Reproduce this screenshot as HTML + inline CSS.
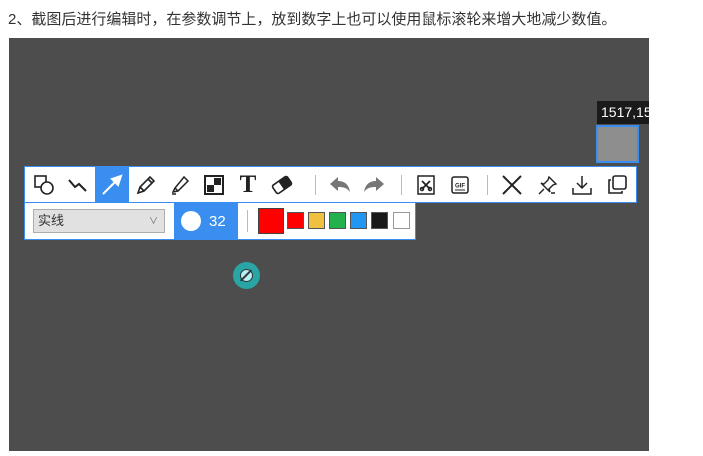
<!DOCTYPE html>
<html><head><meta charset="utf-8"><style>
*{margin:0;padding:0;box-sizing:border-box}
body{width:703px;height:456px;background:#fff;position:relative;overflow:hidden;font-family:"Liberation Sans","Noto Sans CJK SC",sans-serif}
.t{position:absolute;left:8px;top:8px;font-size:15px;color:#333;white-space:nowrap}
.dk{position:absolute;left:9px;top:38px;width:640px;height:413px;background:#4d4d4d}
.a{position:absolute}
.tb{left:24px;top:166px;width:613px;height:37px;background:#fff;border:1px solid #3a8ef0}
.b{position:absolute;top:0;width:34px;height:35px;display:flex;align-items:center;justify-content:center}
.sep{position:absolute;top:8px;width:1px;height:20px;background:#bbb}
.r2{left:24px;top:203px;width:392px;height:37px;background:#fff;border:1px solid #3a8ef0;border-top:none}
.sw{position:absolute;top:9px;width:17px;height:17px;border:1px solid #555}
</style></head><body>
<div class="t">2、截图后进行编辑时，在参数调节上，放到数字上也可以使用鼠标滚轮来增大地减少数值。</div>
<div class="dk"></div>
<div class="a" style="left:597px;top:101px;width:52px;height:23px;background:#1a1a1a;color:#fff;font-size:14px;line-height:23px;padding-left:4px;overflow:hidden;white-space:nowrap">1517,15</div>
<div class="a" style="left:596px;top:125px;width:43px;height:38px;background:#8e8e8e;border:2px solid #3a8ef0"></div>
<div class="a tb">
 <div class="b" style="left:2px"><svg width="22" height="22" viewBox="0 0 22 22" fill="none" stroke="#222" stroke-width="1.6"><rect x="2" y="2" width="11" height="11"/><circle cx="14" cy="14" r="6" fill="#fff"/></svg></div>
 <div class="b" style="left:36px"><svg width="22" height="22" viewBox="0 0 22 22" fill="none" stroke="#222" stroke-width="2"><polyline points="2,6 8,13 12,10 19,17"/></svg></div>
 <div class="b" style="left:70px;background:#3a8ef0"><svg width="24" height="24" viewBox="0 0 24 24" fill="none" stroke="#fff" stroke-width="2"><line x1="3" y1="21" x2="19" y2="5"/><polygon points="21,3 12,6 18,12" fill="#fff"/></svg></div>
 <div class="b" style="left:104px"><svg width="22" height="22" viewBox="0 0 22 22" fill="none" stroke="#222" stroke-width="1.6"><path d="M3 19l2-6L15 3l4 4L9 17z M5 13l4 4 M13 5l4 4"/></svg></div>
 <div class="b" style="left:138px"><svg width="22" height="22" viewBox="0 0 22 22" fill="none" stroke="#222" stroke-width="1.5"><path d="M4 18l2-4 9-11 4 4-10 10z M6 14l3 3 M3 20h4"/></svg></div>
 <div class="b" style="left:172px"><svg width="22" height="22" viewBox="0 0 22 22"><rect x="2" y="2" width="18" height="18" fill="#fff" stroke="#222" stroke-width="2"/><rect x="11" y="4" width="7" height="7" fill="#222"/><rect x="4" y="11" width="7" height="7" fill="#222"/></svg></div>
 <div class="b" style="left:206px;font-family:'Liberation Serif',serif;font-weight:bold;font-size:25px;color:#222">T</div>
 <div class="b" style="left:240px"><svg width="24" height="22" viewBox="0 0 24 22"><g transform="rotate(-35 12 11)"><rect x="3" y="6" width="18" height="10" rx="2" fill="#fff" stroke="#222" stroke-width="1.6"/><rect x="11" y="6" width="10" height="10" rx="1" fill="#222"/></g></svg></div>
 <div class="sep" style="left:290px"></div>
 <div class="b" style="left:298px"><svg width="24" height="22" viewBox="0 0 24 22"><path d="M2 10l8-7v4c7 0 11 4 12 11-3-4-6-5-12-5v4z" fill="#777"/></svg></div>
 <div class="b" style="left:332px"><svg width="24" height="22" viewBox="0 0 24 22"><path d="M22 10l-8-7v4C7 7 3 11 2 18c3-4 6-5 12-5v4z" fill="#777"/></svg></div>
 <div class="sep" style="left:376px"></div>
 <div class="b" style="left:384px"><svg width="22" height="22" viewBox="0 0 22 22" fill="none" stroke="#222" stroke-width="1.5"><rect x="3" y="2" width="16" height="18"/><path d="M7 7l8 8M15 7l-8 8" stroke-width="1.8"/><circle cx="7" cy="15" r="1.5"/><circle cx="15" cy="15" r="1.5"/></svg></div>
 <div class="b" style="left:418px"><svg width="22" height="22" viewBox="0 0 22 22"><rect x="3" y="3" width="16" height="16" rx="2" fill="none" stroke="#222" stroke-width="1.5"/><text x="11" y="13.5" font-size="6" font-weight="bold" text-anchor="middle" font-family="Liberation Sans" fill="#222">GIF</text><line x1="6" y1="16" x2="16" y2="16" stroke="#222"/></svg></div>
 <div class="sep" style="left:462px"></div>
 <div class="b" style="left:470px"><svg width="24" height="24" viewBox="0 0 24 24" stroke="#222" stroke-width="2"><path d="M3 3l18 18M21 3L3 21"/></svg></div>
 <div class="b" style="left:506px"><svg width="22" height="22" viewBox="0 0 22 22" fill="none" stroke="#222" stroke-width="1.4"><path d="M12 3l7 7-3 1-4 4 1 3-9-9 3 1 4-4z M7 15l-5 5 M14 19h4"/></svg></div>
 <div class="b" style="left:540px"><svg width="22" height="22" viewBox="0 0 22 22" fill="none" stroke="#222" stroke-width="1.5"><path d="M11 2v12 M6 9l5 5 5-5 M2 14v6h18v-6"/></svg></div>
 <div class="b" style="left:575px"><svg width="22" height="22" viewBox="0 0 22 22" fill="none" stroke="#222" stroke-width="1.6"><rect x="7" y="2" width="13" height="13" rx="2"/><path d="M5 6H3v13h13v-2"/></svg></div>
</div>
<div class="a r2">
 <div class="a" style="left:8px;top:6px;width:132px;height:24px;background:#e1e1e1;border:1px solid #adadad;font-size:13px;color:#333;line-height:22px;padding-left:4px">实线<span style="position:absolute;right:6px;top:0;font-size:9px;color:#666">&#8744;</span></div>
 <div class="a" style="left:149px;top:0;width:64px;height:36px;background:#3a8ef0"><div class="a" style="left:7px;top:8px;width:20px;height:20px;border-radius:50%;background:#fff"></div><div class="a" style="left:35px;top:10px;color:#fff;font-size:15px">32</div></div>
 <div class="a" style="left:222px;top:7px;width:1px;height:22px;background:#bbb"></div>
 <div class="a" style="left:233px;top:5px;width:26px;height:26px;background:#f00;border:1px solid #444"></div>
 <div class="sw" style="left:262px;background:#f00"></div>
 <div class="sw" style="left:283px;background:#f0c040"></div>
 <div class="sw" style="left:304px;background:#22b14c"></div>
 <div class="sw" style="left:325px;background:#2196f3"></div>
 <div class="sw" style="left:346px;background:#1a1a1a"></div>
 <div class="sw" style="left:368px;background:#fff;border-color:#999"></div>
</div>
<div class="a" style="left:233px;top:262px;width:27px;height:27px;border-radius:50%;background:#2aa5a5"></div>
<div class="a" style="left:240px;top:269px;width:13px;height:13px;border-radius:50%;background:#b5f0f5;border:1.5px solid #333"></div>
<div class="a" style="left:245px;top:268px;width:2px;height:15px;background:#333;transform:rotate(45deg)"></div>
</body></html>
